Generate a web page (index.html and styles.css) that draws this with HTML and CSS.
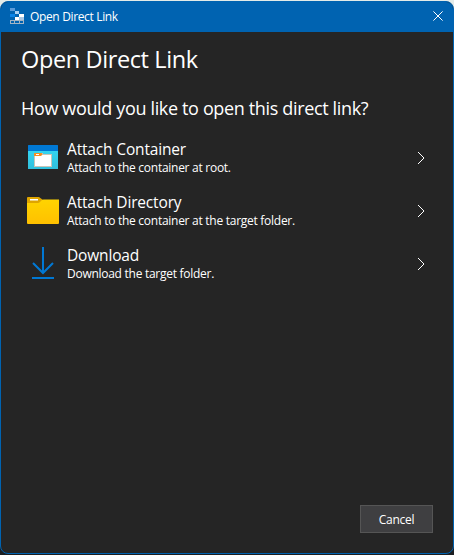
FILE: index.html
```html
<!DOCTYPE html>
<html lang="en">
<head>
<meta charset="utf-8">
<title>Open Direct Link</title>
<link rel="stylesheet" href="styles.css">
</head>
<body>
<div class="window">
  <header class="titlebar">
    <svg class="app-icon" width="14" height="16" viewBox="0 0 14 16" shape-rendering="crispEdges">
      <path fill="#5b9bd9" d="M0 0h5v3H0z"/>
      <path fill="#a9d0f2" d="M5 3h4v3H5z"/>
      <path fill="#0a84e8" d="M0 6h5v3H0z"/>
      <path fill="#fff" d="M9 6h5v3H9zM5 9h4v3H5z"/>
      <path fill="#a9c8e6" d="M9 9h5v3H9z"/>
      <path fill="none" stroke="#a3b4c4" d="M0 12.500h14M0 15.500h14M.5 12v4M4.500 12v4M9.500 12v4M13.500 12v4"/>
    </svg>
    <span class="caption">Open Direct Link</span>
    <svg class="close" width="10" height="10" viewBox="0 0 10 10"><path d="M.4.4l9.200 9.200M9.600.4L.4 9.600"/></svg>
  </header>
  <main class="content">
    <h1>Open Direct Link</h1>
    <h2>How would you like to open this direct link?</h2>
    <div class="options">
      <div class="option">
        <svg class="icon" width="34" height="34" viewBox="0 0 34 34">
          <defs><linearGradient id="cyan" x2="0" y2="1"><stop stop-color="#34d5f0"/><stop offset="1" stop-color="#31bfdc"/></linearGradient></defs>
          <path fill="url(#cyan)" d="M2 10h30v18.500a.5.5 0 0 1-.5.5h-29a.5.5 0 0 1-.5-.5z"/>
          <path fill="#0078d4" d="M2.500 5h29a.5.5 0 0 1 .5.5V11H2V5.500a.5.5 0 0 1 .5-.5z"/>
          <path fill="#c9c5b8" d="M8 13h9v1h9v13H8z"/>
          <path fill="#fff" d="M9 16h6l1-1h9v11H9z"/>
          <path fill="#f78d1e" d="M8 13.500q0-.5.5-.5h7l1 1-1.500 2H8z"/>
          <path fill="#fff" d="M10 14h3v1h-3z"/>
        </svg>
        <div class="label"><div class="name">Attach Container</div><div class="desc">Attach to the container at root.</div></div>
        <svg class="chevron" width="8" height="14" viewBox="0 0 8 14"><path d="M1 1l6 6-6 6"/></svg>
      </div>
      <div class="option">
        <svg class="icon" width="34" height="34" viewBox="0 0 34 34">
          <defs><linearGradient id="gold" x2="0" y2="1"><stop stop-color="#ffd400"/><stop offset="1" stop-color="#ffc000"/></linearGradient></defs>
          <path fill="#dfa500" d="M1 5q0-1 1-1h11l4 3-3 4H1z"/>
          <path fill="url(#gold)" d="M1 10h11q1 0 2-1l2-2q.5-.5 1.500-.5H33V30q0 1-1 1H2q-1 0-1-1z"/>
          <path fill="#fff" d="M4 6h8v1.500H4z"/>
        </svg>
        <div class="label"><div class="name">Attach Directory</div><div class="desc">Attach to the container at the target folder.</div></div>
        <svg class="chevron" width="8" height="14" viewBox="0 0 8 14"><path d="M1 1l6 6-6 6"/></svg>
      </div>
      <div class="option">
        <svg class="icon arrow" width="34" height="34" viewBox="0 0 34 34"><path d="M17 1v26M7 17l10 10 10-10M6 32h22"/></svg>
        <div class="label"><div class="name">Download</div><div class="desc">Download the target folder.</div></div>
        <svg class="chevron" width="8" height="14" viewBox="0 0 8 14"><path d="M1 1l6 6-6 6"/></svg>
      </div>
    </div>
  </main>
  <footer><button class="cancel" type="button">Cancel</button></footer>
</div>
</body>
</html>
```
FILE: styles.css
```css
* { box-sizing: border-box; }
html, body { height: 100%; margin: 0; }
body {
  padding-top: 1px;
  background: linear-gradient(#e4ebe8 50%, #1c1f22 50%);
  color: #fff;
  font-family: "Open Sans", "Noto Sans", sans-serif;
  overflow: hidden;
}
.window {
  display: flex;
  flex-direction: column;
  height: 553px;
  border: 1px solid #0063b1;
  border-radius: 8px;
  background: #252525;
  overflow: hidden;
}
.titlebar {
  display: flex;
  align-items: center;
  height: 30px;
  padding: 0 10px 0 9px;
  background: #0063b1;
}
.app-icon { margin-top: -2px; }
.caption {
  flex: 1;
  margin-left: 6px;
  font-size: 12px;
  line-height: 16px;
  letter-spacing: -0.35px;
}
.close { margin-top: -2px; fill: none; stroke: #fff; stroke-width: 1; }
.content { flex: 1; padding: 10px 20px 0; }
h1, h2 { margin: 0; font-weight: 400; white-space: nowrap; }
h1 { font-size: 23.5px; line-height: 34px; letter-spacing: -0.38px; }
h2 { margin-top: 18px; font-size: 18px; line-height: 28px; letter-spacing: -0.35px; }
.options { margin-top: 9px; }
.option { display: flex; align-items: center; height: 53px; padding: 0 8px 0 5px; }
.icon { flex: none; margin-top: -1px; }
.label { flex: 1; margin-left: 7px; white-space: nowrap; }
.name { font-size: 15.5px; line-height: 19px; letter-spacing: -0.16px; }
.desc { font-size: 12px; line-height: 17px; letter-spacing: -0.27px; }
.arrow { fill: none; stroke: #0078d4; stroke-width: 2; }
.chevron { fill: none; stroke: #fff; stroke-width: 1; }
footer { display: flex; justify-content: flex-end; padding: 0 20px 20px; }
.cancel {
  width: 73px;
  height: 28px;
  padding: 2px 0 0;
  border: 1px solid #555;
  background: #3f3f41;
  color: #fff;
  font: 12px/16px "Open Sans", "Noto Sans", sans-serif;
  letter-spacing: -0.25px;
}
```
